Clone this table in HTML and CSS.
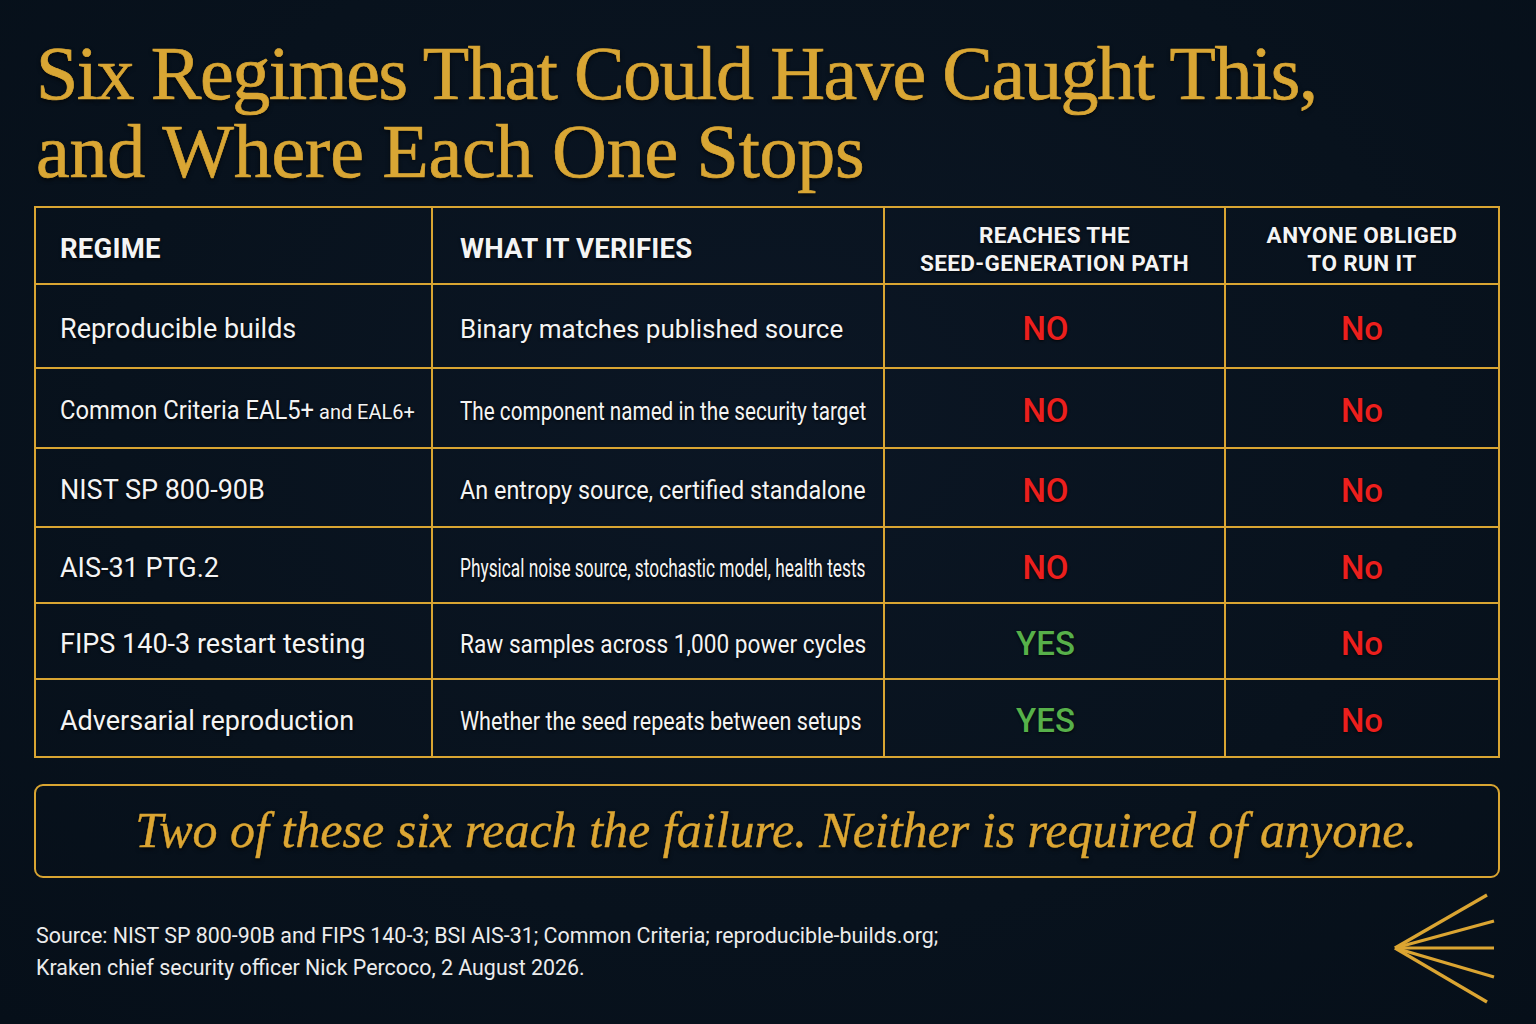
FILE: index.html
```html
<!DOCTYPE html>
<html lang="en">
<head>
<meta charset="utf-8">
<title>Six Regimes</title>
<link rel="stylesheet" href="styles.css">
</head>
<body>
<main class="page">
  <h1 class="title"><span class="line1">Six Regimes That Could Have Caught This,</span><br><span class="line2">and Where Each One Stops</span></h1>

  <div class="table">
    <div class="cell head">REGIME</div>
    <div class="cell head col2">WHAT IT VERIFIES</div>
    <div class="cell head center small">REACHES THE<br>SEED-GENERATION PATH</div>
    <div class="cell head center small">ANYONE OBLIGED<br>TO RUN IT</div>

    <div class="cell">Reproducible builds</div>
    <div class="cell col2">Binary matches published source</div>
    <div class="cell verdict no">NO</div>
    <div class="cell verdict no">No</div>

    <div class="cell"><span class="sq sq-cc">Common Criteria EAL5+<span class="minor"> and EAL6+</span></span></div>
    <div class="cell col2"><span class="sq sq-a">The component named in the security target</span></div>
    <div class="cell verdict no">NO</div>
    <div class="cell verdict no">No</div>

    <div class="cell">NIST SP 800-90B</div>
    <div class="cell col2"><span class="sq sq-b">An entropy source, certified standalone</span></div>
    <div class="cell verdict no">NO</div>
    <div class="cell verdict no">No</div>

    <div class="cell">AIS-31 PTG.2</div>
    <div class="cell col2"><span class="sq sq-c">Physical noise source, stochastic model, health tests</span></div>
    <div class="cell verdict no">NO</div>
    <div class="cell verdict no">No</div>

    <div class="cell">FIPS 140-3 restart testing</div>
    <div class="cell col2"><span class="sq sq-d">Raw samples across 1,000 power cycles</span></div>
    <div class="cell verdict yes">YES</div>
    <div class="cell verdict no">No</div>

    <div class="cell">Adversarial reproduction</div>
    <div class="cell col2"><span class="sq sq-e">Whether the seed repeats between setups</span></div>
    <div class="cell verdict yes">YES</div>
    <div class="cell verdict no">No</div>
  </div>

  <div class="callout">Two of these six reach the failure. Neither is required of anyone.</div>

  <footer class="footer">
    <p class="source">Source: NIST SP 800-90B and FIPS 140-3; BSI AIS-31; Common Criteria; reproducible-builds.org;<br>Kraken chief security officer Nick Percoco, 2 August 2026.</p>
    <svg class="logo" width="110" height="116" viewBox="0 0 110 116" aria-hidden="true">
      <g stroke="#dba532" stroke-width="3.2" stroke-linecap="butt" fill="none">
        <line x1="4" y1="55" x2="96" y2="2"/>
        <line x1="4" y1="55" x2="103" y2="28"/>
        <line x1="4" y1="55" x2="103" y2="55"/>
        <line x1="4" y1="55" x2="103" y2="84"/>
        <line x1="4" y1="55" x2="96" y2="109"/>
      </g>
    </svg>
  </footer>
</main>
</body>
</html>
```

FILE: styles.css
```css
* { box-sizing: border-box; }

html, body {
  margin: 0;
  padding: 0;
  width: 1536px;
  height: 1024px;
  overflow: hidden;
}

body {
  background: radial-gradient(ellipse at 50% 40%, #0b1624 0%, #08121d 60%, #060f19 100%);
  color: #ffffff;
  font-family: Roboto, "Liberation Sans", sans-serif;
}

.page {
  padding: 34px 36px 0 34px;
}

.title {
  margin: 0 0 16px 2px;
  font-family: "Liberation Serif", "Times New Roman", serif;
  font-weight: 400;
  font-size: 76px;
  line-height: 78px;
  color: #d9a634;
  -webkit-text-stroke: 0.7px #d9a634;
  text-shadow: 0 2px 4px rgba(0, 0, 0, 0.7);
}

.line1 { letter-spacing: -1.43px; }
.line2 { letter-spacing: -0.25px; }

.table {
  display: grid;
  width: 1466px;
  grid-template-columns: 397px 452px 341px 274px;
  grid-template-rows: 77px 84px 80px 79px 76px 76px 78px;
  border-top: 2px solid #d9a532;
  border-left: 2px solid #d9a532;
}

.cell {
  display: flex;
  align-items: center;
  padding-left: 24px;
  padding-top: 5px;
  border-right: 2px solid #d9a532;
  border-bottom: 2px solid #d9a532;
  font-size: 27px;
  color: #f4f4f4;
  white-space: nowrap;
  text-shadow: 0 1px 3px rgba(0, 0, 0, 0.8);
}

.col2 {
  padding-left: 27px;
  font-size: 26px;
}

.head {
  font-weight: 700;
  font-size: 27.5px;
  letter-spacing: 0.2px;
  padding-top: 6px;
}

.head.small {
  font-size: 22.5px;
  line-height: 28px;
  letter-spacing: 0.4px;
  padding-top: 6px;
}

.center {
  justify-content: center;
  text-align: center;
  padding-left: 0;
}

.verdict {
  justify-content: center;
  padding-left: 0;
  font-size: 33px;
  font-weight: 500;
}

.verdict.no { color: #ec1f1d; }
.verdict.yes { color: #57b04a; }

.verdict:nth-child(4n+3) { padding-right: 18px; }

.sq {
  display: inline-block;
  transform-origin: 0 50%;
}

.sq-cc { transform: scaleX(0.95); font-size: 25px; }
.minor { font-size: 21px; }
.sq-a { transform: scaleX(0.796); }
.sq-b { transform: scaleX(0.90); }
.sq-c { transform: scaleX(0.666); }
.sq-d { transform: scaleX(0.871); }
.sq-e { transform: scaleX(0.829); }

.callout {
  margin-top: 26px;
  width: 1466px;
  height: 94px;
  border: 2px solid #d9a532;
  border-radius: 9px;
  display: flex;
  align-items: center;
  justify-content: center;
  font-family: "Liberation Serif", "Times New Roman", serif;
  font-style: italic;
  font-size: 50px;
  color: #dca633;
  -webkit-text-stroke: 0.4px #dca633;
  text-shadow: 0 2px 4px rgba(0, 0, 0, 0.7);
  padding-bottom: 2px;
  padding-left: 18px;
}

.footer {
  display: flex;
  justify-content: space-between;
  align-items: flex-start;
  margin-top: 15px;
}

.source {
  margin: 27px 0 0 2px;
  font-size: 21.4px;
  line-height: 32px;
  color: #ececec;
}

.logo {
  margin-right: -1px;
  display: block;
}
```
